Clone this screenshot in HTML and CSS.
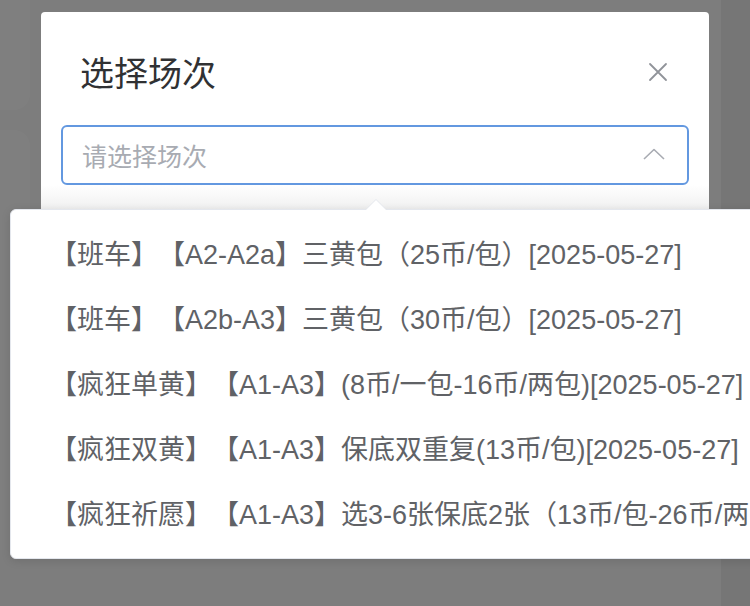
FILE: index.html
```html
<!DOCTYPE html>
<html lang="zh-CN">
<head>
<meta charset="utf-8">
<title>选择场次</title>
<link rel="stylesheet" href="styles.css">
</head>
<body>
<div class="page">
  <div class="bg-card bg-card-left"></div>
  <div class="bg-card bg-card-left2"></div>
  <div class="bg-card bg-card-right"></div>
</div>
<div class="overlay"></div>
<div class="dialog">
  <div class="dialog-header">
    <span class="dialog-title">选择场次</span>
    <svg class="close-icon" width="20" height="20" viewBox="0 0 20 20">
      <path d="M2 2 L18 18 M18 2 L2 18" stroke="#909399" stroke-width="1.8" fill="none" stroke-linecap="round"/>
    </svg>
  </div>
  <div class="dialog-body">
    <div class="select-input">
      <span class="placeholder">请选择场次</span>
      <svg class="chevron" width="22" height="12" viewBox="0 0 22 12">
        <path d="M1 11 L11 1.5 L21 11" stroke="#a8abb2" stroke-width="1.6" fill="none" stroke-linejoin="round"/>
      </svg>
    </div>
  </div>
  <div class="dialog-shade"></div>
</div>
<div class="dropdown">
  <div class="dropdown-arrow"></div>
  <ul class="options">
    <li class="option">【班车】【A2-A2a】三黄包（25币/包）[2025-05-27]</li>
    <li class="option">【班车】【A2b-A3】三黄包（30币/包）[2025-05-27]</li>
    <li class="option">【疯狂单黄】【A1-A3】(8币/一包-16币/两包)[2025-05-27]</li>
    <li class="option">【疯狂双黄】【A1-A3】保底双重复(13币/包)[2025-05-27]</li>
    <li class="option">【疯狂祈愿】【A1-A3】选3-6张保底2张（13币/包-26币/两包）[2025-05-27]</li>
  </ul>
</div>
</body>
</html>
```

FILE: styles.css
```css
html, body {
  margin: 0;
  padding: 0;
  width: 750px;
  height: 606px;
  overflow: hidden;
}
body {
  background: #ffffff;
  font-family: "Liberation Sans", "Noto Sans CJK SC", sans-serif;
  position: relative;
  text-spacing-trim: space-all;
}
.page {
  width: 750px;
  height: 606px;
  position: relative;
  background: #fafafa;
}
.bg-card {
  position: absolute;
  background: #ffffff;
  border-radius: 16px;
}
.bg-card-left { left: -20px; top: -20px; width: 50px; height: 130px; }
.bg-card-left2 { left: -20px; top: 130px; width: 50px; height: 420px; }
.bg-card-right { left: 721px; top: -20px; width: 60px; height: 640px; background: #ececec; }
.overlay {
  position: absolute;
  inset: 0;
  background: rgba(0, 0, 0, 0.5);
}
.dialog {
  position: absolute;
  left: 41px;
  top: 12px;
  width: 668px;
  height: 520px;
  background: #ffffff;
  border-radius: 4px;
  overflow: hidden;
}
.dialog-header {
  display: flex;
  align-items: center;
  justify-content: space-between;
  padding: 40px 41px 0 39px;
  height: 44px;
}
.dialog-title {
  font-size: 34px;
  color: #303133;
  line-height: 44px;
}
.close-icon {
  display: block;
  margin-top: -4px;
}
.dialog-body {
  padding: 29px 20px 0 20px;
}
.select-input {
  box-sizing: border-box;
  height: 60px;
  border: 2px solid #6398e0;
  border-radius: 6px;
  display: flex;
  align-items: center;
  justify-content: space-between;
  padding: 0 22px 0 19px;
}
.placeholder {
  font-size: 25px;
  color: #a8abb2;
}
.chevron {
  display: block;
  margin-top: -2px;
}
.dialog-shade {
  height: 30px;
  background: linear-gradient(#ffffff, #ededed);
}
.dropdown {
  position: absolute;
  left: 10px;
  top: 209px;
  width: 800px;
  background: #ffffff;
  border-radius: 6px;
  border: 1px solid #e4e7ed;
  box-shadow: 0 2px 10px rgba(0, 0, 0, 0.12);
}
.dropdown-arrow {
  position: absolute;
  left: 354px;
  top: -11px;
  width: 0;
  height: 0;
  border-left: 11px solid transparent;
  border-right: 11px solid transparent;
  border-bottom: 11px solid #e4e7ed;
}
.dropdown-arrow::after {
  content: "";
  position: absolute;
  left: -10px;
  top: 1px;
  border-left: 10px solid transparent;
  border-right: 10px solid transparent;
  border-bottom: 10px solid #ffffff;
}
.options {
  list-style: none;
  margin: 0;
  padding: 13px 0 10px 0;
}
.option {
  height: 65px;
  line-height: 65px;
  padding-left: 39px;
  font-size: 27px;
  color: #606266;
  white-space: nowrap;
}
```
